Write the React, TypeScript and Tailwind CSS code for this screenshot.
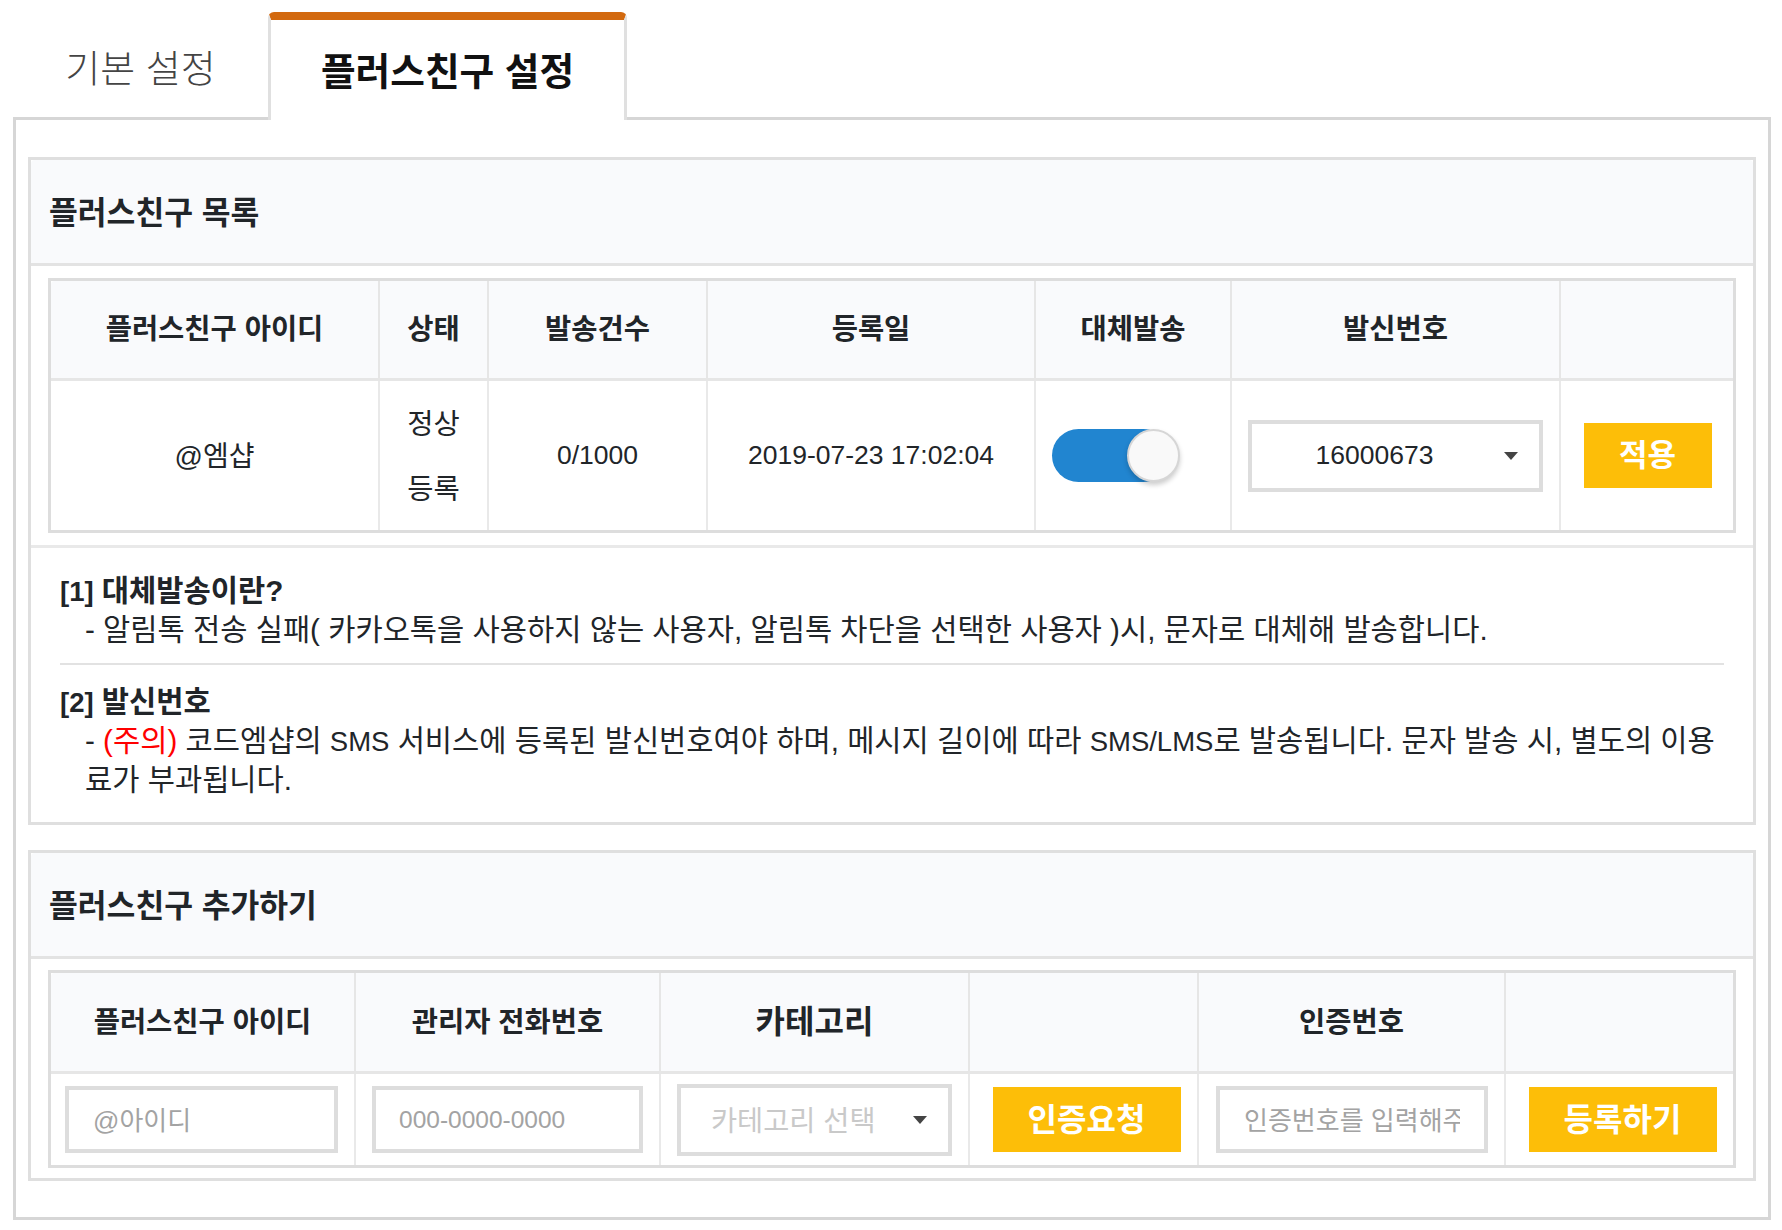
import React from "react";

const font = "font-['Liberation_Sans','Noto_Sans_CJK_KR',sans-serif]";
const th = "border-r-2 border-b-[3px] border-[#e6e6e6] bg-[#f9fafc] p-0 text-center align-middle text-[28.5px] font-bold text-[#212529]";
const thLast = "border-b-[3px] border-[#e6e6e6] bg-[#f9fafc] p-0 text-center align-middle text-[28.5px] font-bold text-[#212529]";
const td = "border-r-2 border-[#e9e9e9] p-0 text-center align-middle text-[26.5px] font-normal text-[#212529]";
const tdLast = "p-0 text-center align-middle text-[26.5px] font-normal text-[#212529]";

function Caret() {
  return (
    <svg width="14" height="8" viewBox="0 0 14 8" className="absolute right-[21px] top-[28px]">
      <polygon points="0,0 14,0 7,8" fill="#444444" />
    </svg>
  );
}

function Card({ title, children }: { title: string; children: React.ReactNode }) {
  return (
    <section className="border-[3px] border-[#dfdfdf] bg-white">
      <div className="flex h-[106px] items-center rounded-tl-[4px] rounded-tr-[4px] border-b-[3px] border-[#e3e3e3] bg-[#f9fafc] pl-[18px] pt-[6px] text-[31.3px] font-semibold text-[#212529]">
        {title}
      </div>
      {children}
    </section>
  );
}

function Btn({ label }: { label: string }) {
  return (
    <button className="ml-[6px] h-[65px] w-[188px] bg-[#fdbe08] text-[32px] font-bold text-white">{label}</button>
  );
}

function Latin({ children }: { children: React.ReactNode }) {
  return <span className="text-[27.5px] leading-[0]">{children}</span>;
}

export default function App() {
  return (
    <div className={`${font} h-[1230px] w-[1782px] overflow-hidden bg-white pl-[13px] pt-[12px]`}>
      <div className="flex h-[108px] items-stretch">
        <div className="flex w-[255px] items-center justify-center pt-[6px] text-[38px] font-light text-[#444444]">
          기본 설정
        </div>
        <div className="relative z-10 flex h-[108px] w-[359px] items-center justify-center rounded-t-[6px] border-x-[3px] border-t-[8px] border-x-[#e0e0e0] border-t-[#d2690f] bg-white pt-[4px] text-[37.7px] font-bold text-[#111111]">
          플러스친구 설정
        </div>
      </div>
      <main className="-mt-[3px] w-[1758px] border-[3px] border-[#d6d6d6] bg-white px-[12px] pb-[36px] pt-[37px]">
        <Card title="플러스친구 목록">
          <div className="border-b-[3px] border-[#e9e9e9] px-[17px] py-[12px]">
            <table className="w-full table-fixed border-separate border-spacing-0 border-[3px] border-[#dddddd]">
              <thead>
                <tr className="h-[100px]">
                  <th className={`${th} w-[329px] rounded-tl-[4px]`}>플러스친구 아이디</th>
                  <th className={`${th} w-[109px]`}>상태</th>
                  <th className={`${th} w-[219px]`}>발송건수</th>
                  <th className={`${th} w-[328px]`}>등록일</th>
                  <th className={`${th} w-[196px]`}>대체발송</th>
                  <th className={`${th} w-[329px]`}>발신번호</th>
                  <th className={`${thLast} rounded-tr-[4px]`}></th>
                </tr>
              </thead>
              <tbody>
                <tr className="h-[149px]">
                  <td className={`${td} pt-[3px] text-[28px]`}>@엠샵</td>
                  <td className={`${td} pt-[3px] text-[28.5px] leading-[65px]`}>
                    정상
                    <br />
                    등록
                  </td>
                  <td className={td}>0/1000</td>
                  <td className={td}>2019-07-23 17:02:04</td>
                  <td className={td}>
                    <div className="relative ml-[16px] h-[53px] w-[128px]">
                      <div className="h-[53px] w-[118px] rounded-full bg-[#2185d0]"></div>
                      <div className="absolute right-0 top-0 h-[53px] w-[53px] rounded-full border-2 border-[#d6d6d6] bg-[#f9f9f9] shadow-[0_3px_5px_rgba(0,0,0,0.2)]"></div>
                    </div>
                  </td>
                  <td className={td}>
                    <div className="relative ml-[16px] flex h-[72px] w-[295px] items-center justify-center border-[4px] border-[#dddddd] pr-[42px]">
                      16000673
                      <Caret />
                    </div>
                  </td>
                  <td className={tdLast}>
                    <button className="ml-[1px] h-[65px] w-[128px] bg-[#fdbe08] pt-[2px] text-[31px] font-bold text-white">적용</button>
                  </td>
                </tr>
              </tbody>
            </table>
          </div>
          <div className="px-[29px] pb-[23px] pt-[23px] text-[29.6px] leading-[39px] text-[#212529]">
            <p className="font-semibold">
              <Latin>[1]</Latin> 대체발송이란?
            </p>
            <p className="pl-[25px]">- 알림톡 전송 실패( 카카오톡을 사용하지 않는 사용자, 알림톡 차단을 선택한 사용자 )시, 문자로 대체해 발송합니다.</p>
            <div className="mb-[17px] mt-[14px] h-[2px] bg-[#e2e2e2]"></div>
            <p className="font-semibold">
              <Latin>[2]</Latin> 발신번호
            </p>
            <p className="pl-[25px]">
              - <span className="text-[#ff0000]">(주의)</span> 코드엠샵의 <Latin>SMS</Latin> 서비스에 등록된 발신번호여야 하며, 메시지 길이에 따라 <Latin>SMS/LMS</Latin>로 발송됩니다. 문자 발송 시, 별도의 이용료가 부과됩니다.
            </p>
          </div>
        </Card>
        <div className="h-[25px]"></div>
        <Card title="플러스친구 추가하기">
          <div className="px-[17px] pb-[10px] pt-[11px]">
            <table className="w-full table-fixed border-separate border-spacing-0 border-[3px] border-[#dddddd]">
              <thead>
                <tr className="h-[101px]">
                  <th className={`${th} w-[305px] rounded-tl-[4px]`}>플러스친구 아이디</th>
                  <th className={`${th} w-[305px]`}>관리자 전화번호</th>
                  <th className={`${th} w-[309px] text-[32px]`}>카테고리</th>
                  <th className={`${th} w-[229px]`}></th>
                  <th className={`${th} w-[307px]`}>인증번호</th>
                  <th className={`${thLast} rounded-tr-[4px]`}></th>
                </tr>
              </thead>
              <tbody>
                <tr className="h-[91px]">
                  <td className={td}>
                    <input readOnly placeholder="@아이디" className="ml-[14px] block h-[67px] w-[273px] border-[4px] border-[#dddddd] pl-[24px] pr-[24px] pt-[3px] text-[26px] outline-none placeholder:text-[#a3a3a3]" />
                  </td>
                  <td className={td}>
                    <input readOnly placeholder="000-0000-0000" className="ml-[16px] block h-[67px] w-[271px] border-[4px] border-[#dddddd] pl-[23px] pr-[24px] text-[24.5px] outline-none placeholder:text-[#a3a3a3]" />
                  </td>
                  <td className={td}>
                    <div className="relative ml-[16px] flex h-[72px] w-[275px] items-center border-[4px] border-[#dddddd] pl-[30px] pt-[3px] text-[28.4px] text-[#c9c9c9]">
                      카테고리 선택
                      <Caret />
                    </div>
                  </td>
                  <td className={td}>
                    <Btn label="인증요청" />
                  </td>
                  <td className={td}>
                    <input readOnly placeholder="인증번호를 입력해주세요" className="ml-[17px] block h-[67px] w-[272px] border-[4px] border-[#dddddd] pl-[24px] pr-[24px] pt-[3px] text-[26px] outline-none placeholder:text-[#a3a3a3]" />
                  </td>
                  <td className={tdLast}>
                    <Btn label="등록하기" />
                  </td>
                </tr>
              </tbody>
            </table>
          </div>
        </Card>
      </main>
    </div>
  );
}
